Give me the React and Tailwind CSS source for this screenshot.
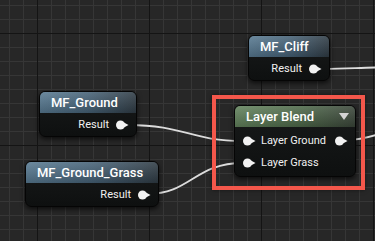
import React from "react";

function Pin() {
  return (
    <svg width="13" height="10" viewBox="0 0 13 10" className="shrink-0 block">
      <circle cx="4.5" cy="5" r="4.5" fill="#f2f2f2" />
      <polygon points="8,2.5 12.5,5 8,7.5" fill="#f2f2f2" />
    </svg>
  );
}

function Header({ title, green, dropdown }) {
  return (
    <div
      className={
        "relative h-[21px] flex items-center pl-[11px] rounded-t-[5px] text-[13px] font-medium text-white " +
        (green
          ? "bg-[linear-gradient(to_right,#62825c,#4d6849_55%,#3a4539)]"
          : "bg-[linear-gradient(to_right,#587a92,#466277_50%,#2f3b44)]")
      }
    >
      <div className="absolute inset-0 rounded-t-[5px] bg-[linear-gradient(to_bottom,rgba(255,255,255,0.12),rgba(0,0,0,0.18))]" />
      <span className="relative">{title}</span>
      {dropdown && (
        <svg width="10" height="7" viewBox="0 0 10 7" className="absolute right-[6px] top-[7px]">
          <polygon points="0,0 10,0 5,7" fill="#d4d4d4" />
        </svg>
      )}
    </div>
  );
}

export default function App() {
  return (
    <div
      className="relative w-[375px] h-[241px] overflow-hidden bg-[#272727] [background-image:linear-gradient(to_right,#141414_1px,transparent_1px),linear-gradient(to_bottom,#141414_1px,transparent_1px),linear-gradient(to_right,#363636_1px,transparent_1px),linear-gradient(to_bottom,#363636_1px,transparent_1px)] [background-size:112px_112px,112px_112px,14px_14px,14px_14px] [background-position:37px_33px,37px_33px,9px_5px,9px_5px]"
      style={{ fontFamily: "Roboto, 'Liberation Sans', sans-serif" }}
    >
      {/* wires */}
      <svg width="375" height="241" className="absolute inset-0">
        <g fill="none" stroke="#dcdcdc" strokeWidth="1.8" strokeLinecap="round">
          <path d="M322 69 C 345 69, 355 68, 376 67.5" />
          <path d="M128 125 C 185 125, 190 141, 243 141" />
          <path d="M148 194 C 190 194, 195 163, 243 163" />
          <path d="M348 140 C 358 140, 366 138, 376 135" />
        </g>
      </svg>

      {/* MF_Cliff */}
      <div className="absolute left-[248px] top-[35px] w-[82px] h-[46px] rounded-[6px] border border-[#050505] bg-[linear-gradient(to_bottom,#181a1a,#0e1010)] shadow-[0_2px_5px_rgba(0,0,0,0.7)]">
        <Header title="MF_Cliff" />
        <div className="h-[24px] flex items-center justify-end pr-[7px] gap-[7px] text-[11px] text-[#f0f0f0]">
          <span>Result</span>
          <Pin />
        </div>
      </div>

      {/* MF_Ground */}
      <div className="absolute left-[39px] top-[91px] w-[98px] h-[46px] rounded-[6px] border border-[#050505] bg-[linear-gradient(to_bottom,#181a1a,#0e1010)] shadow-[0_2px_5px_rgba(0,0,0,0.7)]">
        <Header title="MF_Ground" />
        <div className="h-[24px] flex items-center justify-end pr-[7px] gap-[7px] text-[11px] text-[#f0f0f0]">
          <span>Result</span>
          <Pin />
        </div>
      </div>

      {/* MF_Ground_Grass */}
      <div className="absolute left-[25px] top-[161px] w-[134px] h-[46px] rounded-[6px] border border-[#050505] bg-[linear-gradient(to_bottom,#181a1a,#0e1010)] shadow-[0_2px_5px_rgba(0,0,0,0.7)]">
        <Header title="MF_Ground_Grass" />
        <div className="h-[24px] flex items-center justify-end pr-[7px] gap-[7px] text-[11px] text-[#f0f0f0]">
          <span>Result</span>
          <Pin />
        </div>
      </div>

      {/* Layer Blend */}
      <div className="absolute left-[234px] top-[105px] w-[122px] h-[72px] rounded-[6px] border border-[#050505] bg-[linear-gradient(to_bottom,#181a1a,#0e1010)] shadow-[0_2px_5px_rgba(0,0,0,0.7)]">
        <Header title="Layer Blend" green dropdown />
        <div className="flex flex-col py-[3px] text-[11px] text-[#f0f0f0]">
          <div className="h-[22px] flex items-center pl-[8px] pr-[7px]">
            <Pin />
            <span className="ml-[5px]">Layer Ground</span>
            <div className="flex-1" />
            <Pin />
          </div>
          <div className="h-[22px] flex items-center pl-[8px] pr-[7px]">
            <Pin />
            <span className="ml-[5px]">Layer Grass</span>
          </div>
        </div>
      </div>

      {/* highlight rectangle */}
      <div className="absolute left-[212px] top-[95px] w-[153px] h-[95px] border-4 border-[#f4574b] shadow-[0_0_4px_rgba(0,0,0,0.5)]" />
    </div>
  );
}
